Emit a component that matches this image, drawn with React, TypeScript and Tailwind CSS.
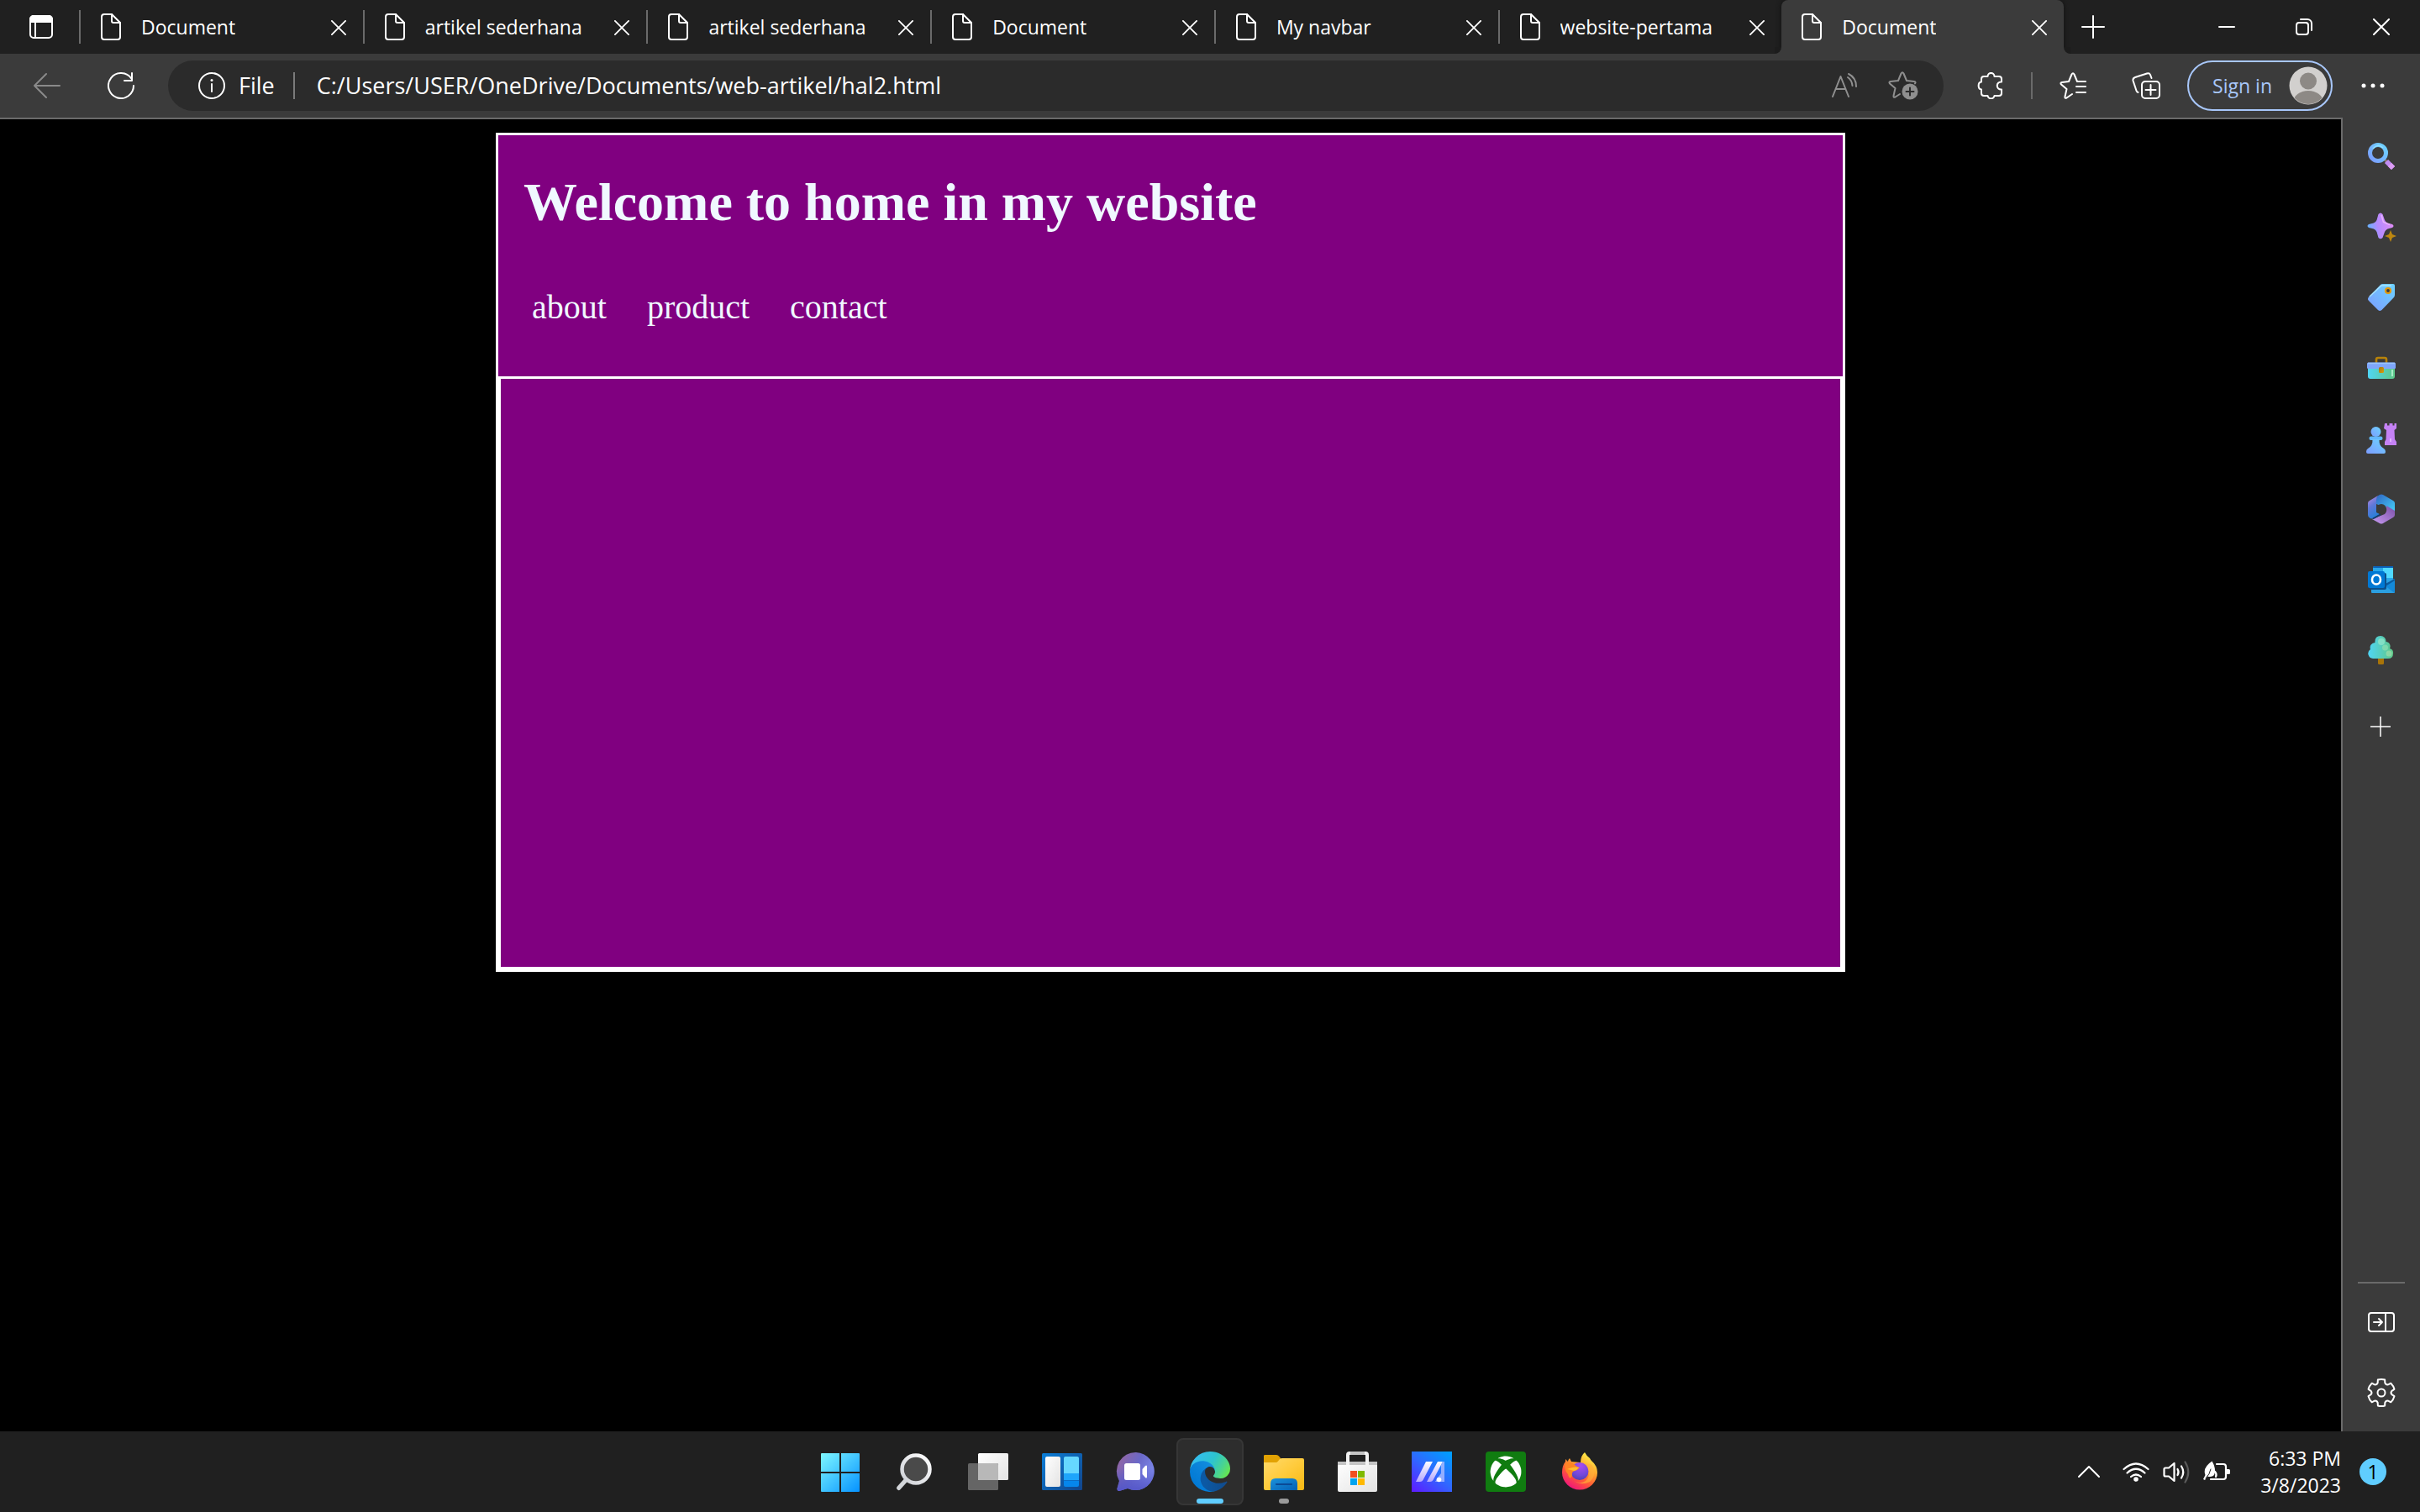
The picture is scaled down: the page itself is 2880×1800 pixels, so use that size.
import { Fragment, type ReactNode } from "react";
import { FaXbox } from "react-icons/fa";

const line = { fill: "none", stroke: "currentColor", strokeWidth: 2, strokeLinecap: "round", strokeLinejoin: "round" } as const;

function PageIcon() {
  return (
    <svg aria-hidden="true" className="h-8 w-6 shrink-0" viewBox="0 0 24 32" {...line}>
      <path d="M4 1H13L23 11V28a3 3 0 0 1-3 3H4a3 3 0 0 1-3-3V4a3 3 0 0 1 3-3Z" />
      <path d="M13 1V9a2 2 0 0 0 2 2H23" />
    </svg>
  );
}

function CrossIcon({ className }: { className: string }) {
  return (
    <svg aria-hidden="true" className={className} viewBox="0 0 20 20" {...line}>
      <path d="M1 1 19 19M19 1 1 19" />
    </svg>
  );
}

function Tab({ title, active = false }: { title: string; active?: boolean }) {
  return (
    <div className={active ? "relative flex h-16 min-w-0 flex-1 rounded-t-lg bg-[#3b3b3b] shadow-[0_0_6px_#101010]" : "relative flex h-16 min-w-0 flex-1"}>
      {active && (
        <>
          <span className="absolute -left-2 bottom-0 size-2 overflow-hidden bg-[#3b3b3b]">
            <span className="block size-full rounded-br-lg bg-[#1c1c1c]" />
          </span>
          <span className="absolute -right-2 bottom-0 size-2 overflow-hidden bg-[#3b3b3b]">
            <span className="block size-full rounded-bl-lg bg-[#1c1c1c]" />
          </span>
        </>
      )}
      <button type="button" className="flex min-w-0 flex-1 items-center gap-6 pl-6 text-left">
        <PageIcon />
        <span className="truncate text-[23px] leading-8">{title}</span>
      </button>
      <button type="button" aria-label={`Close ${title}`} className="flex w-16 items-center justify-end pr-5 pt-px">
        <CrossIcon className="size-[18px]" />
      </button>
    </div>
  );
}

const tabs = ["Document", "artikel sederhana", "artikel sederhana", "Document", "My navbar", "website-pertama", "Document"];

function TabStrip() {
  return (
    <header className="relative z-10 flex h-16 overflow-hidden bg-[#202020]">
      <button type="button" aria-label="Tab actions" className="flex w-[94px] items-center justify-center pl-1">
        <svg aria-hidden="true" className="h-7 w-7" viewBox="0 0 28 28" {...line}>
          <rect x="1" y="1" width="26" height="26" rx="4" />
          <path d="M1 8V5a4 4 0 0 1 4-4H23a4 4 0 0 1 4 4V8Z" fill="currentColor" />
          <path d="M7 8V27" />
        </svg>
      </button>
      <span className="my-3 w-[2px] bg-[#6a6a6a]" />
      <nav aria-label="Tabs" className="flex min-w-0 flex-1">
        {tabs.map((t, i) => (
          <Fragment key={i}>
            <Tab title={t} active={i === 6} />
            {i < 5 && <span className="my-3 w-[2px] bg-[#6a6a6a]" />}
          </Fragment>
        ))}
      </nav>
      <div className="flex w-[424px]">
        <button type="button" aria-label="New tab" className="flex w-[70px] items-center justify-center">
          <svg aria-hidden="true" className="size-7" viewBox="0 0 28 28" {...line}>
            <path d="M14 1V27M1 14H27" />
          </svg>
        </button>
        <span className="flex-1" />
        <button type="button" aria-label="Minimize" className="flex w-[92px] items-center justify-center">
          <svg aria-hidden="true" className="size-5" viewBox="0 0 20 20" {...line}>
            <path d="M1 10H19" />
          </svg>
        </button>
        <button type="button" aria-label="Restore" className="flex w-[92px] items-center justify-center">
          <svg aria-hidden="true" className="size-5" viewBox="0 0 20 20" {...line}>
            <rect x="1" y="5" width="14" height="14" rx="3" />
            <path d="M6 1H14a5 5 0 0 1 5 5V14" />
          </svg>
        </button>
        <button type="button" aria-label="Close window" className="flex w-[92px] items-center justify-center">
          <CrossIcon className="size-5" />
        </button>
      </div>
    </header>
  );
}

function Toolbar() {
  return (
    <div className="flex h-[76px] items-center bg-[#3b3b3b]">
      <div className="flex w-[200px] items-center gap-14 pl-10">
        <button type="button" aria-label="Back" className="text-[#8a8a8a]">
          <svg aria-hidden="true" className="size-8" viewBox="0 0 32 32" {...line}>
            <path d="M31 16H1M15 2 1 16 15 30" />
          </svg>
        </button>
        <button type="button" aria-label="Refresh">
          <svg aria-hidden="true" className="size-8" viewBox="0 0 32 32" {...line}>
            <path d="M31 16A15 15 0 1 1 28.500 7.700M29 1V10H20" />
          </svg>
        </button>
      </div>
      <div className="flex h-[60px] min-w-0 flex-1 items-center rounded-full bg-[#2b2b2b] pl-9 text-[27px]">
        <button type="button" className="flex items-center gap-4">
          <svg aria-hidden="true" className="size-8" viewBox="0 0 32 32" {...line}>
            <circle cx="16" cy="16" r="15" />
            <path d="M16 14V23" />
            <circle cx="16" cy="9.500" r="1.500" fill="currentColor" stroke="none" />
          </svg>
          <span>File</span>
        </button>
        <span className="ml-[22px] h-8 w-[2px] bg-[#7a7a7a]" />
        <input
          type="text"
          aria-label="Address"
          defaultValue="C:/Users/USER/OneDrive/Documents/web-artikel/hal2.html"
          className="ml-[26px] min-w-0 flex-1 bg-transparent outline-none"
        />
        <div className="flex items-center gap-9 pr-[30px] text-[#8f8f8f]">
          <button type="button" aria-label="Read aloud">
            <svg aria-hidden="true" className="size-8" viewBox="0 0 32 32" {...line}>
              <path d="M2 29 11.500 5 21 29M5.500 20H17.500M20 6c3 2 5 5 5.500 10M21 2c6 3 9 8 9 15" />
            </svg>
          </button>
          <button type="button" aria-label="Add to favorites">
            <svg aria-hidden="true" className="h-[34px] w-9" viewBox="0 0 36 34" {...line}>
              <path d="M14 27 8.500 30.500Q6 31.500 6.500 29L8.500 20 2 14.500Q.5 12.500 3 12L12 11 15.500 2.500Q17 0 18.500 2.500L22 11 31 12Q33.500 12.500 32 14.500" />
              <circle cx="26" cy="24" r="9.500" fill="currentColor" stroke="none" />
              <path d="M26 19.500V28.500M21.500 24H30.500" stroke="#2b2b2b" />
            </svg>
          </button>
        </div>
      </div>
      <div className="flex items-center pl-10">
        <button type="button" aria-label="Extensions">
          <svg aria-hidden="true" className="size-8" viewBox="0 0 32 32" {...line}>
            <path d="M5 8Q5 5 8 5H12.500C12.500-.5 20.500-.5 20.500 5H26Q29 5 29 8V11.500C22 11 22 21 29 20.500V25Q29 28 26 28H20.500C20 32.500 13 32.500 12.500 28H8Q5 28 5 25V20.500C.5 20 .5 12 5 11.500Z" />
          </svg>
        </button>
        <span className="ml-8 h-8 w-[2px] bg-[#6a6a6a]" />
        <button type="button" aria-label="Favorites" className="ml-8">
          <svg aria-hidden="true" className="size-8" viewBox="0 0 32 32" {...line}>
            <path d="M15 26 8.500 30.500Q6 31.500 6.500 29L8.500 20 2 14.500Q.5 12.500 3 12L11 11 14.500 2.500Q16 0 17.500 2.500L21 11H31M20 17H31M20 24H31" />
          </svg>
        </button>
        <button type="button" aria-label="Collections" className="ml-[54px]">
          <svg aria-hidden="true" className="h-8 w-[34px]" viewBox="0 0 34 32" {...line}>
            <rect x="12" y="11" width="21" height="20" rx="4" />
            <path d="M22.500 15V27M16.500 21H28.500M23.500 7 22 3Q21 .5 18 1.500L4 6Q1 7 1.500 10L5.500 22Q6 23.500 7.500 24" />
          </svg>
        </button>
        <button type="button" className="ml-8 flex h-[60px] items-center gap-5 rounded-full border-2 border-[#a8c7fa] pl-7 pr-1 text-[23px] text-[#a8c7fa]">
          Sign in
          <svg aria-hidden="true" className="size-[46px]" viewBox="0 0 46 46">
            <defs>
              <clipPath id="avatar"><circle cx="23" cy="23" r="22" /></clipPath>
            </defs>
            <circle cx="23" cy="23" r="22.500" fill="#d2d0ce" />
            <g clipPath="url(#avatar)" fill="#8d8985">
              <circle cx="23" cy="17.500" r="10" />
              <ellipse cx="23" cy="42" rx="17.500" ry="13" />
            </g>
          </svg>
        </button>
        <button type="button" aria-label="Settings and more" className="ml-[34px] mr-[42px]">
          <svg aria-hidden="true" className="size-7" viewBox="0 0 28 28" fill="currentColor">
            <circle cx="3" cy="14" r="2.500" />
            <circle cx="14" cy="14" r="2.500" />
            <circle cx="25" cy="14" r="2.500" />
          </svg>
        </button>
      </div>
    </div>
  );
}

function WebPage() {
  return (
    <main className="flex-1 border-r-2 border-t-2 border-[#6a6a6a] bg-black px-4 pt-4 font-['Liberation_Serif',serif] text-[#f0f8ff]">
      <div className="mx-auto w-full max-w-[1606px] border-[3px] border-white bg-[#800080]">
        <div className="h-[290px] border-b-[3px] border-white px-[30px] pt-[42px]">
          <h1 className="text-[64px] font-bold leading-[76px]">Welcome to home in my website</h1>
          <ul className="mt-16 flex gap-12 pl-[10px] text-[40px] leading-[46px]">
            <li><a href="#about">about</a></li>
            <li><a href="#product">product</a></li>
            <li><a href="#contact">contact</a></li>
          </ul>
        </div>
        <div className="h-[703px] border-x-[3px] border-b-[3px] border-white" />
      </div>
    </main>
  );
}

const gear = (() => {
  const pt = (deg: number, r: number) => {
    const a = (deg * Math.PI) / 180;
    return `${(18 + r * Math.cos(a)).toFixed(2)} ${(18 + r * Math.sin(a)).toFixed(2)}`;
  };
  const parts: string[] = [];
  for (let i = 0; i < 6; i++) {
    const t = -90 + i * 60;
    parts.push(`${i === 0 ? "M" : "L"}${pt(t - 15, 16)}Q${pt(t, 16.6)} ${pt(t + 15, 16)}L${pt(t + 20, 12.6)}Q${pt(t + 30, 10.6)} ${pt(t + 40, 12.6)}`);
  }
  return parts.join("") + "Z";
})();

function SideButton({ label, children }: { label: string; children: ReactNode }) {
  return (
    <button type="button" aria-label={label} className="flex h-[84px] w-full items-center justify-center">
      <svg aria-hidden="true" className="size-9" viewBox="0 0 36 36">{children}</svg>
    </button>
  );
}

function Sidebar() {
  return (
    <aside className="flex w-[92px] flex-col bg-[#3b3b3b] pb-1 pt-1">
      <svg aria-hidden="true" className="absolute size-0">
        <defs>
          <linearGradient id="sky" x1="1" y1="0" x2="0" y2="1"><stop offset="0" stopColor="#6cd3ff" /><stop offset="1" stopColor="#7c9cff" /></linearGradient>
          <linearGradient id="lilac" x1="0" y1="0.6" x2="1" y2="0.4"><stop offset="0" stopColor="#62b4ff" /><stop offset="0.4" stopColor="#b38bff" /><stop offset="1" stopColor="#e08cf5" /></linearGradient>
          <linearGradient id="mint" x1="0" y1="0" x2="1" y2="0"><stop offset="0" stopColor="#4fd5f5" /><stop offset="1" stopColor="#5fc888" /></linearGradient>
          <linearGradient id="gold" x1="0" y1="0" x2="1" y2="1"><stop offset="0" stopColor="#a87408" /><stop offset="1" stopColor="#d8a010" /></linearGradient>
          <linearGradient id="m1" x1="0" y1="0" x2="0.4" y2="1"><stop offset="0" stopColor="#c08be0" /><stop offset="0.5" stopColor="#5e78d8" /><stop offset="1" stopColor="#2a7fd8" /></linearGradient>
          <linearGradient id="m2" x1="0" y1="0" x2="1" y2="1"><stop offset="0" stopColor="#2f66c4" /><stop offset="1" stopColor="#45d0f8" /></linearGradient>
          <linearGradient id="m3" x1="0" y1="1" x2="1" y2="0"><stop offset="0" stopColor="#c79bf0" /><stop offset="1" stopColor="#7a4fa8" /></linearGradient>
        </defs>
      </svg>
      <SideButton label="Search">
        <path d="M21 21 25 25" stroke="#8a7468" strokeWidth="3" />
        <circle cx="14" cy="14" r="9.500" fill="none" stroke="url(#sky)" strokeWidth="5" />
        <path d="M24 24 32 32" stroke="#c18cf2" strokeWidth="6" />
        <path d="M28 28 32 32" stroke="#dc9cf4" strokeWidth="6" />
        <path d="M8 9Q14 2 20 8" fill="none" stroke="#8fe2ff" strokeWidth="1.500" />
      </SideButton>
      <SideButton label="Discover">
        <path d="M14.500 3Q17 0 19.500 3L22 10Q23 12.500 25.500 13.500L31 15Q34 17 31 19L25.500 20.500Q23 21.500 22 24L19.500 31Q17 33.500 14.500 31L12.500 24Q11.500 21.500 9 20.500L3 19Q0 17 3 15L9 13.500Q11.500 12.500 12.500 10Z" fill="url(#lilac)" />
        <path d="M18 4 20.500 12.500 28 15.500" fill="none" stroke="#f0bdff" strokeWidth="1.500" opacity=".8" />
        <path d="M29 22 31 27 36 29 31 31 29 36 27 31 22 29 27 27Z" fill="#bd8710" />
      </SideButton>
      <SideButton label="Shopping">
        <path d="M17 3Q18 2 20 2H32Q34 2 34 4V15Q34 17 32.500 18.500L18.500 33Q16 35 14 33L3 22Q1 20 3 17.500Z" fill="url(#sky)" />
        <path d="M4 17 18 4H30" fill="none" stroke="#a5e4ff" strokeWidth="1.500" />
        <circle cx="26" cy="10" r="3" fill="#3b3b3b" stroke="#e39a0c" strokeWidth="2.200" />
      </SideButton>
      <SideButton label="Tools">
        <path d="M12 12V8Q12 6 14 6H22Q24 6 24 8V12" fill="none" stroke="#b88309" strokeWidth="2.600" />
        <path d="M2 17H34V28Q34 31 31 31H5Q2 31 2 28Z" fill="url(#mint)" />
        <path d="M31 20V28" stroke="#a7edc6" strokeWidth="2" />
        <rect x="1" y="11.500" width="34" height="7.500" rx="1.500" fill="#7fa6fb" />
        <path d="M2 12.500H34" stroke="#99c4ff" strokeWidth="1.500" />
        <rect x="15" y="17" width="6" height="7" rx="1.500" fill="url(#gold)" />
      </SideButton>
      <SideButton label="Games">
        <path d="M22 0H25V2.500H27.500V0H31.500V2.500H33.500V0H36V6L33.500 8 34 19 36 22V26H22V22L23.500 19 24 8 21 6Z" fill="#c582f5" />
        <path d="M29 18V22" stroke="#e9c0ff" strokeWidth="1.500" />
        <circle cx="11.500" cy="10" r="6" fill="url(#sky)" />
        <rect x="3.500" y="15.500" width="16" height="4.500" rx="2" fill="#62b8ff" />
        <path d="M7.500 19H15.500Q15 27 21 30Q23 31 23 34Q23 36 21 36H2Q0 36 0 34Q0 31 2 30Q8 27 7.500 19Z" fill="url(#sky)" />
      </SideButton>
      <SideButton label="Microsoft 365">
        <path d="M16 1Q18 0 20 1L32 8Q34 9 34 11V21L12 12V6Q12 3 16 1Z" fill="url(#m2)" />
        <path d="M34 20V25Q34 27 32 28L20 35Q18 36 16 35L7 30 22 24Q25 21 24 17L24 14Z" fill="url(#m3)" />
        <path d="M14 2Q12 4 12 7V22L16 24 8 29Q6 30 4 28.500Q2 27 2 25V11Q2 9 4 8Z" fill="url(#m1)" />
        <path d="M8 29.500 17 24.500" stroke="#123f6e" strokeWidth="2" />
        <circle cx="18" cy="18" r="6" fill="#3b3b3b" />
      </SideButton>
      <SideButton label="Outlook">
        <path d="M8 4Q8 2 10 2H32V20H8Z" fill="#28a8ea" />
        <path d="M8 4Q8 2 10 2H32V4Z" fill="#0a60b8" />
        <rect x="20" y="4" width="12" height="12" fill="#50d9ff" />
        <path d="M6 20H22L34 17V33Q34 34 33 34H7Q6 34 6 33Z" fill="#2b9fe0" />
        <path d="M34 17 22 25 33 33.500Q34 33 34 32Z" fill="#1389d8" />
        <path d="M34 17V19L23 26 21 24Z" fill="#0b5a9c" />
        <rect x="4" y="10" width="20" height="20" rx="2" fill="#0b4f8a" />
        <rect x="2" y="8" width="20" height="20" rx="2" fill="#0078d4" />
        <ellipse cx="12" cy="18" rx="5" ry="5.500" fill="none" stroke="#fff" strokeWidth="2.600" />
      </SideButton>
      <SideButton label="Drop">
        <rect x="14" y="26" width="7" height="9" rx="1.500" fill="#a97408" />
        <g fill="url(#mint)">
          <path d="M17 1A6.500 6.500 0 0 1 23.500 8A5.500 5.500 0 0 1 28 16A5.500 5.500 0 0 1 32 22Q32 28 26 28H8A6 6 0 0 1 5 17A6 6 0 0 1 10.500 9Q10 1 17 1Z" />
        </g>
        <circle cx="18" cy="8" r="4" fill="#8fe5c8" opacity=".8" />
        <circle cx="22.500" cy="15" r="3.500" fill="#8fe0b0" opacity=".7" />
        <circle cx="27" cy="22" r="3.500" fill="#9fdcaa" opacity=".7" />
      </SideButton>
      <div className="pt-[7px]">
        <SideButton label="Add">
          <path d="M17 6V30M5 18H29" stroke="#fff" strokeWidth="1.500" />
        </SideButton>
      </div>
      <span className="flex-1" />
      <span className="mx-auto mb-1 h-[2px] w-14 bg-[#6a6a6a]" />
      <SideButton label="Hide sidebar">
        <g {...line}>
          <rect x="3" y="7" width="30" height="22" rx="3" />
          <path d="M23 7V29M9 18H19M15 14 19 18 15 22" />
        </g>
      </SideButton>
      <SideButton label="Settings">
        <path d={gear} {...line} />
        <circle cx="18" cy="18" r="4.500" {...line} />
      </SideButton>
    </aside>
  );
}

function TaskButton({ label, state, children }: { label: string; state?: "active" | "open"; children: ReactNode }) {
  return (
    <button
      type="button"
      aria-label={label}
      className={state === "active"
        ? "relative flex size-20 items-center justify-center rounded-lg border-2 border-[#363636] bg-[#2d2d2d]"
        : "relative flex size-20 items-center justify-center"}
    >
      <svg aria-hidden="true" className="size-12" viewBox="0 0 48 48">{children}</svg>
      {state === "active" && <span className="absolute bottom-0 h-[6px] w-8 rounded-full bg-[#60cdff]" />}
      {state === "open" && <span className="absolute bottom-[2px] h-[6px] w-3 rounded-full bg-[#9a9a9a]" />}
    </button>
  );
}

function TaskIcons() {
  return (
    <nav aria-label="Taskbar" className="flex gap-2">
      <svg aria-hidden="true" className="absolute size-0">
        <defs>
          <linearGradient id="win" gradientUnits="userSpaceOnUse" x1="0" y1="0" x2="48" y2="48"><stop offset="0" stopColor="#82fbff" /><stop offset="1" stopColor="#0491ff" /></linearGradient>
          <linearGradient id="pale" x1="0" y1="0" x2="1" y2="1"><stop offset="0" stopColor="#fff" /><stop offset="1" stopColor="#e3e3e3" /></linearGradient>
          <linearGradient id="lens" x1="1" y1="0" x2="0" y2="1"><stop offset="0" stopColor="#fff" /><stop offset="1" stopColor="#cdd0d6" /></linearGradient>
          <linearGradient id="wid" x1="0" y1="0" x2="1" y2="1"><stop offset="0" stopColor="#0a7ed8" /><stop offset="1" stopColor="#12448a" /></linearGradient>
          <linearGradient id="chat" x1="0.1" y1="0.2" x2="0.9" y2="0.6"><stop offset="0" stopColor="#8d66a8" /><stop offset="0.5" stopColor="#6a68c8" /><stop offset="1" stopColor="#7b86e8" /></linearGradient>
          <linearGradient id="chatb" x1="0" y1="0" x2="0" y2="1"><stop offset="0.4" stopColor="#5558c8" stopOpacity="0" /><stop offset="1" stopColor="#5456c8" /></linearGradient>
          <linearGradient id="e1" x1="0.2" y1="0" x2="1" y2="0"><stop offset="0" stopColor="#0c59a4" /><stop offset="1" stopColor="#114a8b" /></linearGradient>
          <linearGradient id="e2" x1="0.9" y1="0.1" x2="0.2" y2="0.9"><stop offset="0" stopColor="#1490df" /><stop offset="0.5" stopColor="#0a82d9" /><stop offset="1" stopColor="#0078d4" /></linearGradient>
          <linearGradient id="e3" x1="0" y1="0.3" x2="1" y2="0.7"><stop offset="0" stopColor="#35bdf5" /><stop offset="0.5" stopColor="#2dc3cf" /><stop offset="0.8" stopColor="#4bd58c" /><stop offset="1" stopColor="#66e650" /></linearGradient>
          <linearGradient id="fold" x1="0" y1="0" x2="1" y2="1"><stop offset="0" stopColor="#ffda6b" /><stop offset="0.5" stopColor="#ffcb3c" /><stop offset="1" stopColor="#f7b813" /></linearGradient>
          <linearGradient id="slot" x1="0" y1="0" x2="1" y2="1"><stop offset="0" stopColor="#1a92dc" /><stop offset="1" stopColor="#0560b4" /></linearGradient>
          <linearGradient id="asus" x1="0.1" y1="1" x2="0.9" y2="0"><stop offset="0" stopColor="#5b20ff" /><stop offset="0.5" stopColor="#2f68ff" /><stop offset="1" stopColor="#009dff" /></linearGradient>
          <linearGradient id="slash" x1="0" y1="0" x2="0" y2="1"><stop offset="0" stopColor="#fff" /><stop offset="1" stopColor="#b6a8ff" /></linearGradient>
          <linearGradient id="ff" x1="0.85" y1="0.1" x2="0.3" y2="1"><stop offset="0" stopColor="#fff04a" /><stop offset="0.35" stopColor="#ffa52e" /><stop offset="0.65" stopColor="#ff5a36" /><stop offset="1" stopColor="#f0137e" /></linearGradient>
          <radialGradient id="globe" cx="0.55" cy="0.2" r="0.9"><stop offset="0" stopColor="#a94cf0" /><stop offset="0.6" stopColor="#7048d8" /><stop offset="1" stopColor="#4440a8" /></radialGradient>
        </defs>
      </svg>
      <TaskButton label="Start">
        <path d="M1 3Q1 2 2 2H23V24H1ZM25 2H46Q47 2 47 3V24H25ZM1 26H23V48H2Q1 48 1 47ZM25 26H47V47Q47 48 46 48H25Z" fill="url(#win)" />
      </TaskButton>
      <TaskButton label="Search">
        <path d="M15 33 5.500 43.500" stroke="#d3d6da" strokeWidth="5" strokeLinecap="round" />
        <circle cx="26" cy="21" r="16.500" fill="#4a4a4a" stroke="url(#lens)" strokeWidth="4.500" />
      </TaskButton>
      <TaskButton label="Task view">
        <rect x="12" y="2" width="36" height="32" rx="1.500" fill="url(#pale)" />
        <rect x="0" y="14" width="36" height="32" rx="1.500" fill="#656565" />
        <path d="M12 14H34.500Q36 14 36 15.500V34H12Z" fill="#b8b8b8" />
      </TaskButton>
      <TaskButton label="Widgets">
        <rect x="0" y="2" width="48" height="44" rx="1.500" fill="url(#wid)" />
        <rect x="4" y="6" width="18" height="36" rx="2" fill="url(#pale)" />
        <path d="M26 8Q26 6 28 6H42Q44 6 44 8V26H26Z" fill="#66d7ff" />
        <rect x="26" y="26" width="18" height="8" fill="#1ea5fb" />
        <path d="M26 34.500H44V40Q44 42 42 42H28Q26 42 26 40Z" fill="#0686ec" />
      </TaskButton>
      <TaskButton label="Chat">
        <path d="M24 1A22.500 22.500 0 1 1 14 44L4 47Q1 47 1.500 44L4 35A22.500 22.500 0 0 1 24 1Z" fill="url(#chat)" />
        <path d="M24 1A22.500 22.500 0 1 1 14 44L4 47Q1 47 1.500 44L4 35A22.500 22.500 0 0 1 24 1Z" fill="url(#chatb)" />
        <rect x="10" y="14" width="19" height="20" rx="2.500" fill="#fff" />
        <path d="M31.500 21 35 17Q37 15.500 37 18V30Q37 32.500 35 31L31.500 27Z" fill="#fff" />
      </TaskButton>
      <TaskButton label="Edge" state="active">
        <g transform="scale(.1875)">
          <g transform="translate(-4.63 -4.92)">
            <path d="M235.680 195.460a93.730 93.730 0 0 1-10.540 4.710 101.870 101.870 0 0 1-35.900 6.460c-47.320 0-88.540-32.550-88.540-74.320A31.480 31.480 0 0 1 117.130 105c-42.800 1.800-53.800 46.400-53.800 72.530 0 73.880 68.090 81.370 82.760 81.370 7.910 0 19.840-2.300 27-4.560l1.310-.44a128.340 128.340 0 0 0 66.600-52.800 4 4 0 0 0-5.320-5.640z" fill="url(#e1)" />
            <path d="M110.340 246.340A79.200 79.200 0 0 1 87.600 225a80.720 80.720 0 0 1 29.530-120c3.120-1.470 8.450-4.130 15.540-4a32.350 32.350 0 0 1 25.690 13 31.880 31.880 0 0 1 6.360 18.660c0-.21 24.460-79.600-80-79.600-43.900 0-80 41.660-80 78.210a130.150 130.150 0 0 0 12.110 56 128 128 0 0 0 156.380 67.110 75.550 75.550 0 0 1-62.780-8z" fill="url(#e2)" />
            <path d="M156.940 153.780c-.81 1.050-3.300 2.500-3.300 5.660 0 2.610 1.700 5.120 4.720 7.230 14.380 10 41.490 8.680 41.560 8.680a59.560 59.560 0 0 0 30.270-8.350 61.380 61.380 0 0 0 30.430-52.880c.26-22.410-8-37.310-11.340-43.910C228.090 28.760 182.350 4.920 132.610 4.920a128 128 0 0 0-128 126.200c.48-36.540 36.800-66.050 80-66.050 3.500 0 23.460.34 42 10.070 16.340 8.580 24.900 18.940 30.850 29.210 6.180 10.670 7.280 24.150 7.280 29.520s-2.740 13.330-7.800 19.910z" fill="url(#e3)" />
          </g>
        </g>
      </TaskButton>
      <TaskButton label="File Explorer" state="open">
        <path d="M0 5Q0 4 1.500 4H15Q17 4 18 5.500L20 8V16H0Z" fill="#e2a203" />
        <path d="M0 13H14Q16 13 17 11.500L19 9Q20 8 22 8H46Q48 8 48 10V44Q48 46 46 46H2Q0 46 0 44Z" fill="url(#fold)" />
        <path d="M8 46V38Q8 32 14 32H34Q40 32 40 38V46Z" fill="url(#slot)" />
        <path d="M15 39H33" stroke="#0a4a96" strokeWidth="2.200" strokeLinecap="round" />
      </TaskButton>
      <TaskButton label="Microsoft Store">
        <path d="M12 16V4Q12 2 14 2H33Q35 2 35 4V16" fill="none" stroke="#f2f2f2" strokeWidth="4" />
        <path d="M15 2H32" stroke="#c4c4c4" strokeWidth="4" />
        <path d="M0 12H47V46Q47 48 45 48H2Q0 48 0 46Z" fill="url(#pale)" />
        <path d="M0 12H47V16H0Z" fill="#c4c4c4" />
        <path d="M10 12H14V16H10ZM33 12H37V16H33Z" fill="#f4f4f4" />
        <rect x="15" y="23" width="8" height="8" fill="#f25022" />
        <rect x="24" y="23" width="8" height="8" fill="#7fba00" />
        <rect x="15" y="32" width="8" height="8" fill="#00a4ef" />
        <rect x="24" y="32" width="8" height="8" fill="#ffb900" />
      </TaskButton>
      <TaskButton label="MyASUS">
        <rect width="48" height="48" fill="url(#asus)" />
        <path d="M17 12H25L13.500 34Q12.500 36 10 36H5Z" fill="url(#slash)" />
        <path d="M31 12H37L25.500 34Q24.500 36 22 36H18Z" fill="url(#slash)" />
        <path d="M39 12V36H28L31 31 35 26V16L37 12Z" fill="#a6b8ff" opacity=".85" />
        <circle cx="32.500" cy="33.500" r="2.800" fill="#fff" />
      </TaskButton>
      <TaskButton label="Xbox">
        <rect width="48" height="48" rx="4" fill="#107c10" />
        <FaXbox x="5" y="5" size={38} color="#fff" />
      </TaskButton>
      <TaskButton label="Firefox">
        <path d="M30 1Q32 5 36 8Q37 10 38 11Q45 17 45 25A21 20.500 0 0 1 3 25Q3 17 7 12V9L10 12Q10 10 12 8L14 12 25 13Q25 5 30 1Z" fill="url(#ff)" />
        <circle cx="24" cy="23.500" r="10.500" fill="url(#globe)" />
        <path d="M7 14Q12 11 17 15Q20 18 24 19Q22 22 18 23Q14 24 15 29Q12 35 10 27Q5 22 7 14Z" fill="#ff8424" />
        <path d="M15 19Q20 18 23 19Q21 22 17 23Q14 22 9 21Z" fill="#ffbd2e" />
        <path d="M34 20Q37 30 31 35Q25 39 17 35Q26 41 36 36Q43 30 41 20Q38 14 33 15Q30 14 29 14Q33 17 34 20Z" fill="#ffb13b" opacity=".65" />
      </TaskButton>
    </nav>
  );
}

function Tray() {
  return (
    <div className="flex min-w-0 flex-1 basis-0 items-center justify-end">
      <button type="button" aria-label="Show hidden icons">
        <svg aria-hidden="true" className="h-4 w-7" viewBox="0 0 28 16" {...line}>
          <path d="M2 14 14 2 26 14" />
        </svg>
      </button>
      <button type="button" aria-label="Network, sound and battery" className="ml-[26px] flex gap-4">
        <svg aria-hidden="true" className="size-8" viewBox="0 0 32 32" {...line} strokeWidth={2.2}>
          <path d="M1.500 13Q16 0 30.500 13M5.500 17.500Q16 8 26.500 17.500M10 22Q16 17 22 22" />
          <circle cx="16" cy="25" r="2.800" fill="currentColor" stroke="none" />
        </svg>
        <svg aria-hidden="true" className="size-8" viewBox="0 0 32 32" {...line} strokeWidth={2.2}>
          <path d="M1.500 13Q1.500 11.500 3 11.500H7L13.500 6V27L7 21.500H3Q1.500 21.500 1.500 20ZM17.500 13Q19.500 16.500 17.500 20M22 9.500Q26.500 16.500 22 23.500" />
          <path d="M26.500 4.500Q34 16.500 26.500 28.500" stroke="#5a5a5a" />
        </svg>
        <svg aria-hidden="true" className="size-8" viewBox="0 0 32 32" {...line} strokeWidth={2.2}>
          <path d="M16 7H24Q27 7 27 10V22Q27 25 24 25H9" />
          <path d="M28 13H30.500Q32 13 32 14.500V17.500Q32 19 30.500 19H28Z" fill="currentColor" stroke="none" />
          <path d="M10.500 3.500Q16 13 13 20Q10 23 5 21.500L2 26 0 25 2.500 20Q-1 11 10.500 3.500Z" fill="currentColor" stroke="none" />
          <path d="M3 24Q8 19 9 13" stroke="#202020" strokeWidth="1" />
          <path d="M14 16Q16.500 19 15 22" />
        </svg>
      </button>
      <button type="button" className="ml-9 text-right text-[23px] leading-8">
        <span className="block">6:33 PM</span>
        <span className="block">3/8/2023</span>
      </button>
      <button type="button" aria-label="1 notification" className="ml-[22px] mr-10 flex size-8 items-center justify-center rounded-full bg-[#60cdff] text-[23px] leading-8 text-black">
        1
      </button>
    </div>
  );
}

export default function App() {
  return (
    <div className="flex min-h-screen flex-col bg-black font-['Open_Sans','Noto_Sans',sans-serif] text-white">
      <TabStrip />
      <Toolbar />
      <div className="flex flex-1">
        <WebPage />
        <Sidebar />
      </div>
      <footer className="flex h-24 items-center bg-[#202020]">
        <div className="flex-1" />
        <TaskIcons />
        <Tray />
      </footer>
    </div>
  );
}
